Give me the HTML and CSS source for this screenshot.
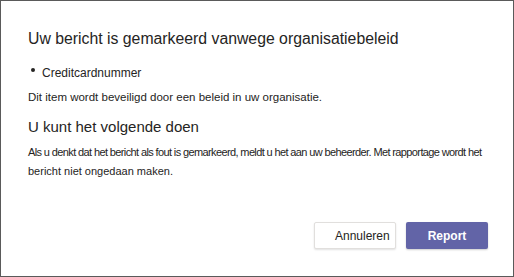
FILE: index.html
```html
<!DOCTYPE html>
<html lang="nl">
<head>
<meta charset="utf-8">
<link rel="stylesheet" href="styles.css">
</head>
<body>
<div class="dialog">
  <h1 class="title">Uw bericht is gemarkeerd vanwege organisatiebeleid</h1>
  <ul class="reasons">
    <li>Creditcardnummer</li>
  </ul>
  <p class="info">Dit item wordt beveiligd door een beleid in uw organisatie.</p>
  <h2 class="subtitle">U kunt het volgende doen</h2>
  <p class="desc"><span class="tight">Als u denkt dat het bericht als fout is gemarkeerd, meldt u het aan uw beheerder. Met rapportage wordt het</span><span class="rest">bericht niet ongedaan maken.</span></p>
  <div class="actions">
    <button class="btn btn-secondary">Annuleren</button>
    <button class="btn btn-primary">Report</button>
  </div>
</div>
</body>
</html>
```
FILE: styles.css
```css
* { box-sizing: border-box; }
html, body { margin: 0; padding: 0; background: #fff; }
body { font-family: "Liberation Sans", Arial, sans-serif; color: #252423; }
.dialog {
  width: 514px;
  height: 277px;
  border: 1px solid #5a5a5a;
  padding: 28px 25px 0 27px;
  display: flex;
  flex-direction: column;
}
.title {
  margin: 0;
  font-size: 15.8px;
  font-weight: normal;
  line-height: 20px;
}
.reasons {
  margin: 16px 0 0 0;
  padding: 0 0 0 14px;
  list-style: none;
  font-size: 12px;
  line-height: 16px;
}
.reasons li { position: relative; }
.reasons li::before {
  content: "";
  position: absolute;
  left: -11px;
  top: 3px;
  width: 4px;
  height: 4px;
  border-radius: 50%;
  background: #252423;
}
.info {
  margin: 8px 0 0 0;
  font-size: 11.5px;
  line-height: 16px;
}
.subtitle {
  margin: 12px 0 0 0;
  font-size: 15px;
  font-weight: normal;
  line-height: 20px;
}
.desc {
  margin: 6px 0 0 0;
  font-size: 11px;
  line-height: 19px;
}
.tight {
  display: block;
  white-space: nowrap;
  letter-spacing: -0.62px;
}
.rest { display: block; }
.actions {
  margin-top: auto;
  margin-bottom: 27px;
  display: flex;
  justify-content: flex-end;
  gap: 10px;
}
.btn {
  width: 82px;
  height: 27px;
  border-radius: 2px;
  font-family: "Liberation Sans", Arial, sans-serif;
  font-size: 12px;
  cursor: pointer;
}
.btn-secondary {
  background: #fff;
  color: #252423;
  border: 1px solid #e1dfdd;
  box-shadow: 0 1px 2px rgba(0,0,0,0.12);
  padding-left: 20px;
}
.btn-primary {
  background: #6264a7;
  color: #fff;
  border: none;
  font-weight: bold;
  box-shadow: 0 1px 2px rgba(0,0,0,0.2);
}
```
